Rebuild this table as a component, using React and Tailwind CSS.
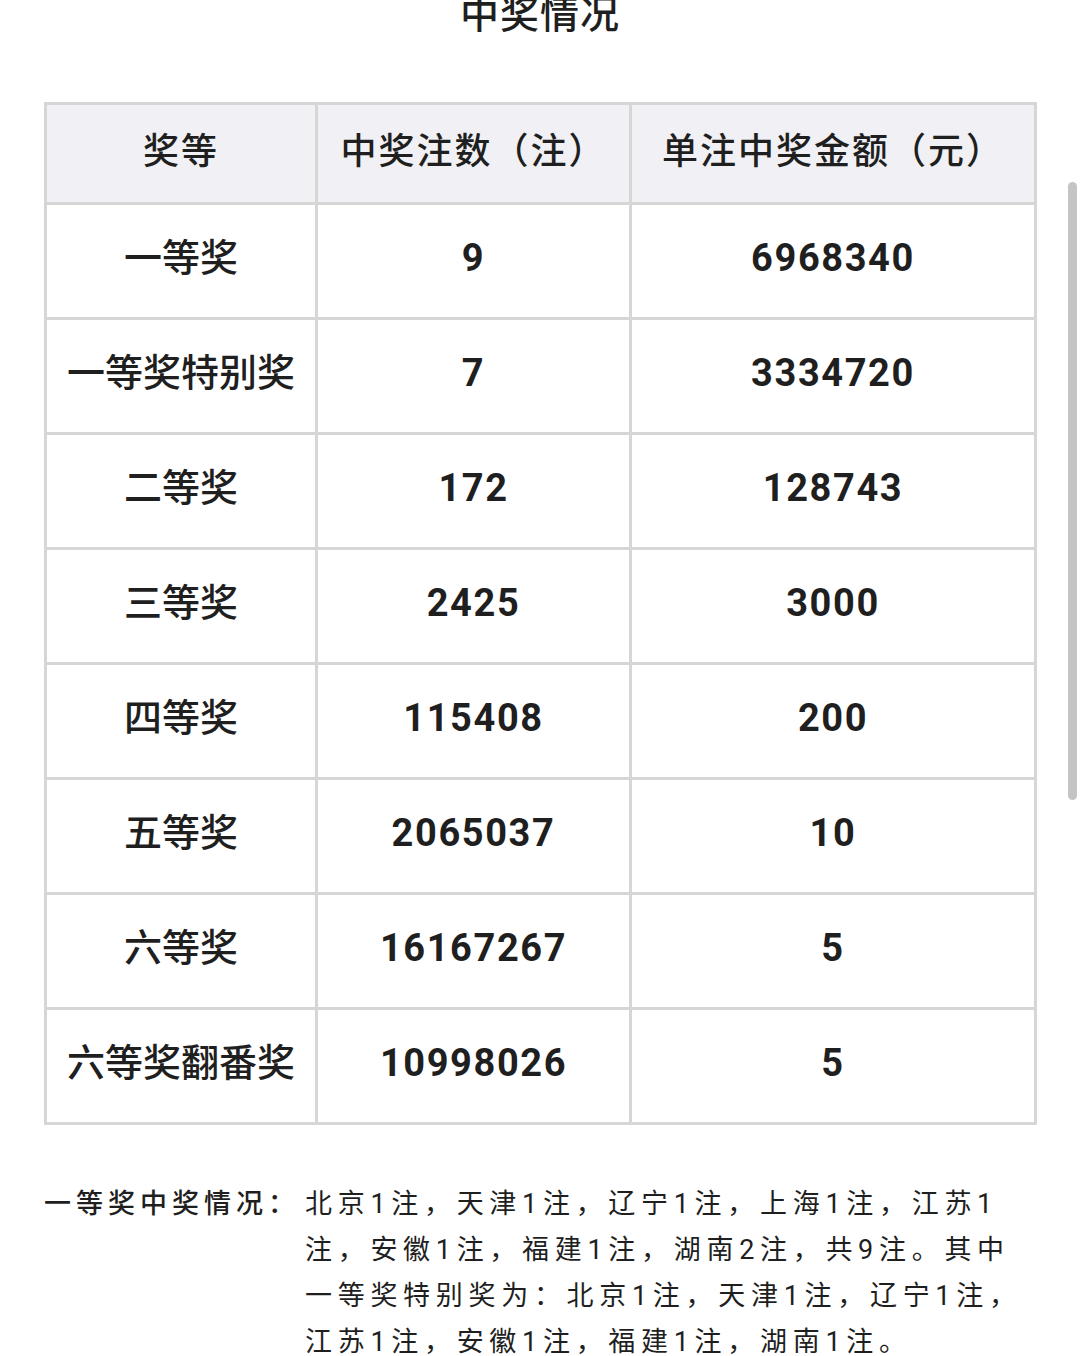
const rows = [
  { name: '一等奖', count: '9', amount: '6968340' },
  { name: '一等奖特别奖', count: '7', amount: '3334720' },
  { name: '二等奖', count: '172', amount: '128743' },
  { name: '三等奖', count: '2425', amount: '3000' },
  { name: '四等奖', count: '115408', amount: '200' },
  { name: '五等奖', count: '2065037', amount: '10' },
  { name: '六等奖', count: '16167267', amount: '5' },
  { name: '六等奖翻番奖', count: '10998026', amount: '5' },
]

const lines = [
  '北京1注，天津1注，辽宁1注，上海1注，江苏1',
  '注，安徽1注，福建1注，湖南2注，共9注。其中',
  '一等奖特别奖为：北京1注，天津1注，辽宁1注，',
  '江苏1注，安徽1注，福建1注，湖南1注。',
]

export default function App() {
  return (
    <div
      className="relative w-[1080px] h-[1356px] overflow-hidden bg-white text-[#1f1f1f]"
      style={{ fontFamily: 'Roboto, "Noto Sans CJK SC", sans-serif' }}
    >
      {/* Title, cut off by the top edge */}
      <h2 className="-mt-[3px] text-center text-[39px] leading-[37px] font-medium tracking-[1px]">中奖情况</h2>

      {/* Prize table */}
      <table className="mt-[68px] ml-[44px] w-[990px] table-fixed border-collapse border-[3px] border-[#d6d6d6]">
        <colgroup>
          <col className="w-[271px]" />
          <col className="w-[314px]" />
          <col className="w-[405px]" />
        </colgroup>
        <thead>
          <tr className="h-[100px] bg-[#f1f1f5]">
            <th className="border-[3px] border-[#d6d6d6] pb-[4px] text-[36px] font-medium tracking-[2px]">奖等</th>
            <th className="border-[3px] border-[#d6d6d6] pb-[4px] text-[36px] font-medium tracking-[2px]">中奖注数（注）</th>
            <th className="border-[3px] border-[#d6d6d6] pb-[4px] text-[36px] font-medium tracking-[2px]">单注中奖金额（元）</th>
          </tr>
        </thead>
        <tbody>
          {rows.map((r) => (
            <tr key={r.name} className="h-[115px]">
              <td className="border-[3px] border-[#d6d6d6] pb-[5px] text-center text-[38px] font-medium whitespace-nowrap">{r.name}</td>
              <td className="border-[3px] border-[#d6d6d6] pb-[5px] text-center text-[38px] font-bold tracking-[1.6px]">{r.count}</td>
              <td className="border-[3px] border-[#d6d6d6] pb-[5px] text-center text-[38px] font-bold tracking-[1.6px]">{r.amount}</td>
            </tr>
          ))}
        </tbody>
      </table>

      {/* First prize breakdown */}
      <div className="mt-[56px] ml-[44px] flex text-[27px] leading-[46px]">
        <div className="w-[261px] shrink-0 font-medium tracking-[5px]">一等奖中奖情况：</div>
        <div className="tracking-[5.7px]">
          {lines.map((l) => (
            <div key={l} className="whitespace-nowrap">{l}</div>
          ))}
        </div>
      </div>

      {/* Scrollbar */}
      <div className="absolute left-[1068px] top-[182px] h-[618px] w-[9px] rounded-full bg-[#c4c4c4]" />
    </div>
  )
}
